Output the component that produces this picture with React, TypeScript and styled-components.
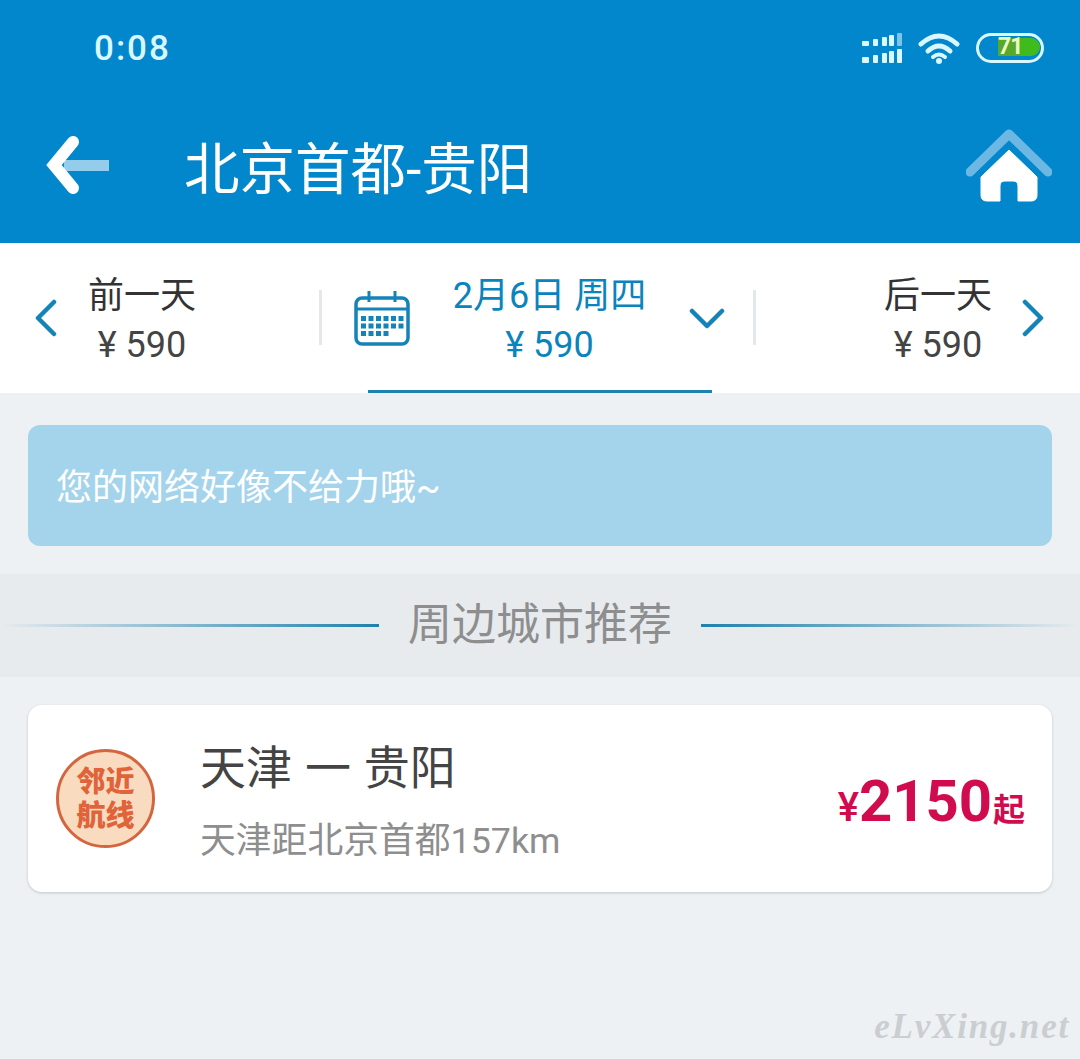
import React from 'react';
import styled, { createGlobalStyle } from 'styled-components';

const GlobalStyle = createGlobalStyle`
    html, body {
        margin: 0;
        padding: 0;
        background: #edf1f4;
    }
    * {
        box-sizing: border-box;
    }
`
const FONT = `Roboto, "Noto Sans CJK SC", sans-serif`;

const Page = styled.div`
    position: relative;
    width: 1080px;
    height: 1059px;
    overflow: hidden;
    background: #edf1f4;
    font-family: ${FONT};
`
const Header = styled.header`
    height: 243px;
    background: #0287cd;
`
const StatusBar = styled.div`
    height: 96px;
    display: flex;
    align-items: center;
    padding: 0 36px 0 94px;
`
const Clock = styled.span`
    font-size: 35px;
    font-weight: 500;
    letter-spacing: 2px;
    color: #d9f7ff;
    margin-right: auto;
`
const StatusIcons = styled.div`
    display: flex;
    align-items: center;
    gap: 16px;
`
const Battery = styled.div`
    width: 68px;
    height: 30px;
    border: 3px solid #d9f7ff;
    border-radius: 15px;
    padding: 2px 1px;
    display: flex;
    justify-content: flex-end;
`
const BatteryFill = styled.div`
    width: 42px;
    height: 18px;
    border-radius: 0 9px 9px 0;
    background: linear-gradient(90deg, #5aa82a 0, #5aa82a 21px, #3fbb1e 21px);
    color: #eaf9c8;
    font-size: 23px;
    font-weight: 700;
    letter-spacing: -1px;
    line-height: 18px;
    text-align: left;
`
const NavBar = styled.div`
    height: 147px;
    display: flex;
    align-items: center;
    padding: 0 28px 9px 46px;
`
const NavTitle = styled.h1`
    margin: 0 auto 0 74px;
    font-size: 55.5px;
    font-weight: 400;
    color: #fff;
    white-space: nowrap;
`
const DateBar = styled.div`
    height: 150px;
    background: #fff;
    display: flex;
    align-items: center;
    padding: 0 35px 0 34px;
`
const SideDay = styled.div<{ $end?: boolean }>`
    width: ${p => (p.$end ? '289px' : '285px')};
    display: flex;
    align-items: center;
    justify-content: ${p => (p.$end ? 'flex-end' : 'flex-start')};
    gap: ${p => (p.$end ? '29px' : '30px')};
`
const CurrentDay = styled.div`
    position: relative;
    flex: 1;
    height: 150px;
    display: flex;
    align-items: center;
    padding: 0 28px 0 32px;
`
const Divider = styled.i`
    width: 3px;
    height: 55px;
    margin-top: -2px;
    background: #e4e8ea;
    flex: none;
`
const Underline = styled.span`
    position: absolute;
    left: 46px;
    bottom: 0;
    width: 344px;
    height: 3px;
    background: #1f81ad;
`
const DayText = styled.div<{ $active?: boolean }>`
    padding-top: 6px;
    text-align: center;
    font-size: 36px;
    line-height: 49px;
    color: ${p => (p.$active ? '#0a84bd' : '#333')};
    ${p => p.$active && 'flex: 1;'}
`
const Price = styled.div<{ $active?: boolean }>`
    color: ${p => (p.$active ? '#0a84bd' : '#444')};
`
const Notice = styled.div`
    margin: 32px 28px 28px;
    height: 121px;
    background: #a4d4ec;
    border-radius: 12px;
    padding: 0 28px 4px;
    display: flex;
    align-items: center;
    font-size: 36px;
    color: #fff;
`
const SectionBar = styled.div`
    height: 103px;
    background: #e7ebee;
    display: flex;
    align-items: center;
    gap: 29px;
`
const SectionLine = styled.i<{ $flip?: boolean }>`
    flex: 1;
    height: 3px;
    background: linear-gradient(${p => (p.$flip ? '270deg' : '90deg')}, rgba(31, 129, 173, 0), #1f81ad);
`
const SectionTitle = styled.span`
    font-size: 44px;
    line-height: 60px;
    margin-top: -1px;
    color: #8e8e8e;
`
const Card = styled.div`
    margin: 28px 28px 0;
    height: 187px;
    background: #fff;
    border-radius: 14px;
    box-shadow: 0 1px 3px rgba(0, 0, 0, 0.18);
    display: flex;
    align-items: center;
    padding: 0 27px 0 28px;
`
const Badge = styled.div`
    width: 99px;
    height: 99px;
    border-radius: 50%;
    border: 3px solid #d4663f;
    background: #f9dcc0;
    color: #e0633a;
    font-size: 29px;
    font-weight: 900;
    line-height: 34px;
    text-align: center;
    display: flex;
    align-items: center;
    justify-content: center;
    flex: none;
`
const Route = styled.div`
    margin-left: 45px;
    padding-top: 4px;
    flex: 1;
`
const RouteTitle = styled.div`
    font-size: 46px;
    line-height: 60px;
    word-spacing: 1.5px;
    color: #444;
    white-space: pre;
`
const RouteNote = styled.div`
    margin-top: 20px;
    font-size: 35.8px;
    line-height: 46px;
    color: #8e8e8e;
`
const Fare = styled.div`
    display: flex;
    align-items: baseline;
    padding-top: 4px;
    color: #d00c4e;
    font-weight: 700;
`
const FareSign = styled.span`
    font-size: 40px;
    font-weight: 500;
`
const FareValue = styled.span`
    font-size: 58px;
`
const FareUnit = styled.span`
    font-size: 32px;
    margin-left: 1px;
`
const Watermark = styled.div`
    position: absolute;
    right: 10px;
    bottom: 12px;
    font-family: "Liberation Serif", serif;
    font-style: italic;
    font-weight: 700;
    font-size: 35px;
    letter-spacing: 1.8px;
    color: #cbced1;
`

const SignalIcon = () => (
    <svg width="41" height="31" viewBox="0 0 41 31">
        <g fill="#d9f7ff">
            <rect x="1" y="8" width="7" height="5" rx="1" />
            <rect x="12" y="6" width="5" height="7" rx="1" />
            <rect x="21" y="4" width="5" height="9" rx="1" />
            <rect x="28" y="2" width="5" height="11" rx="1" />
            <rect x="1" y="24" width="7" height="6" rx="1" />
            <rect x="12" y="22" width="5" height="8" rx="1" />
            <rect x="21" y="20" width="5" height="10" rx="1" />
            <rect x="28" y="18" width="5" height="12" rx="1" />
            <rect x="36" y="16" width="5" height="14" rx="1" />
        </g>
        <rect x="36" y="0" width="5" height="13" rx="1" fill="#7fc4e8" />
    </svg>
)

const WifiIcon = () => (
    <svg width="42" height="31" viewBox="0 0 42 31" fill="none" stroke="#d9f7ff" strokeWidth="5" strokeLinecap="round">
        <path d="M3 11 Q21 -5 39 11" />
        <path d="M10 18 Q21 8 32 18" />
        <path d="M15 24 Q21 19 27 24" strokeWidth="4" />
        <circle cx="21" cy="28" r="3" fill="#d9f7ff" stroke="none" />
    </svg>
)

const BackIcon = () => (
    <svg width="64" height="62" viewBox="0 0 64 62">
        <rect x="18" y="26" width="45" height="11" fill="#93cdeb" />
        <path d="M27 8 L8 31 L27 54" fill="none" stroke="#fff" strokeWidth="12" strokeLinecap="round" strokeLinejoin="miter" />
    </svg>
)

const HomeIcon = () => (
    <svg width="86" height="74" viewBox="0 0 86 74">
        <path d="M4 44 L43 6 L82 44" fill="none" stroke="#6db8e3" strokeWidth="9" strokeLinecap="round" strokeLinejoin="round" />
        <path
            d="M43 22 L71 49 V67 Q71 73 65 73 H52 V58 Q52 53 47 53 H39 Q34 53 34 58 V73 H21 Q15 73 15 67 V49 Z"
            fill="#fff"
            stroke="#fff"
            strokeLinejoin="round"
        />
    </svg>
)

const Chevron = ({ dir }: { dir: 'left' | 'right' | 'down' }) => {
    const paths = {
        left: 'M20 3 L4 19 L20 35',
        right: 'M4 3 L20 19 L4 35',
        down: 'M3 4 L18 19 L33 4',
    };
    const box = dir === 'down' ? [36, 23] : [24, 38];
    return (
        <svg width={box[0]} height={box[1]} viewBox={`0 0 ${box[0]} ${box[1]}`}>
            <path d={paths[dir]} fill="none" stroke="#1484b8" strokeWidth="4.5" strokeLinecap="round" strokeLinejoin="round" />
        </svg>
    );
}

const CalendarIcon = () => {
    const rows = [0, 1, 2];
    const cols = [0, 1, 2, 3, 4, 5];
    return (
        <svg width="56" height="56" viewBox="0 0 56 56">
            <rect x="2" y="8" width="52" height="46" rx="6" fill="none" stroke="#1484b8" strokeWidth="3.5" />
            <path d="M2 19 H54 M15 1 V12 M41 1 V12" stroke="#1484b8" strokeWidth="3" />
            <g fill="#1484b8">
                {rows.map(r =>
                    cols.filter(c => r < 2 || c < 4).map(c => (
                        <rect key={`${r}-${c}`} x={7 + c * 7.5} y={26 + r * 7.5} width="5" height="5" />
                    ))
                )}
            </g>
        </svg>
    );
}

const App = () => (
    <Page>
        <GlobalStyle />
        <Header>
            <StatusBar>
                <Clock>0:08</Clock>
                <StatusIcons>
                    <SignalIcon />
                    <WifiIcon />
                    <Battery>
                        <BatteryFill>71</BatteryFill>
                    </Battery>
                </StatusIcons>
            </StatusBar>
            <NavBar>
                <BackIcon />
                <NavTitle>北京首都-贵阳</NavTitle>
                <HomeIcon />
            </NavBar>
        </Header>
        <DateBar>
            <SideDay>
                <Chevron dir="left" />
                <DayText>
                    前一天
                    <Price>¥ 590</Price>
                </DayText>
            </SideDay>
            <Divider />
            <CurrentDay>
                <CalendarIcon />
                <DayText $active>
                    2月6日 周四
                    <Price $active>¥ 590</Price>
                </DayText>
                <Chevron dir="down" />
                <Underline />
            </CurrentDay>
            <Divider />
            <SideDay $end>
                <DayText>
                    后一天
                    <Price>¥ 590</Price>
                </DayText>
                <Chevron dir="right" />
            </SideDay>
        </DateBar>
        <Notice>您的网络好像不给力哦~</Notice>
        <SectionBar>
            <SectionLine />
            <SectionTitle>周边城市推荐</SectionTitle>
            <SectionLine $flip />
        </SectionBar>
        <Card>
            <Badge>
                邻近
                <br />
                航线
            </Badge>
            <Route>
                <RouteTitle>天津 一 贵阳</RouteTitle>
                <RouteNote>天津距北京首都157km</RouteNote>
            </Route>
            <Fare>
                <FareSign>¥</FareSign>
                <FareValue>2150</FareValue>
                <FareUnit>起</FareUnit>
            </Fare>
        </Card>
        <Watermark>eLvXing.net</Watermark>
    </Page>
);

export default App;
